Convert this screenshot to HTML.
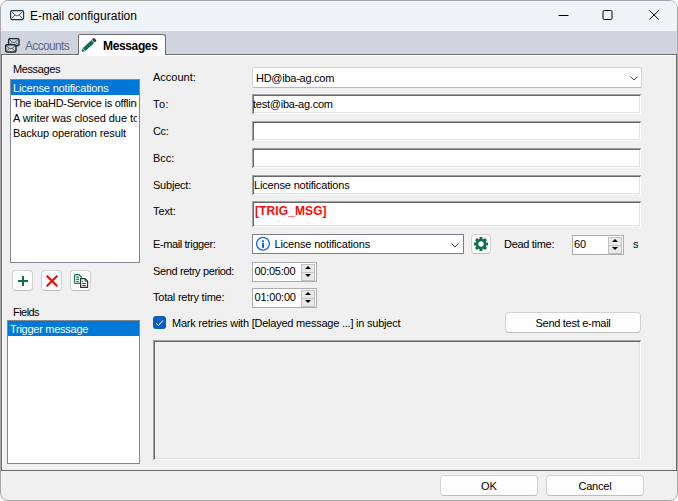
<!DOCTYPE html>
<html>
<head>
<meta charset="utf-8">
<title>E-mail configuration</title>
<style>
html,body{margin:0;padding:0;background:#fff;}
body{width:678px;height:501px;overflow:hidden;position:relative;font-family:"Liberation Sans",sans-serif;font-size:11px;color:#000;}
#win{position:absolute;left:0;top:0;width:678px;height:501px;border:1px solid #a8a8a8;border-radius:8px;background:#f0f0f0;overflow:hidden;box-sizing:border-box;}
#win *{position:absolute;box-sizing:border-box;white-space:nowrap;}
#title{left:0;top:0;width:676px;height:30px;background:#eff4f9;}
#title .cap{left:29px;top:7px;font-size:12px;line-height:16px;color:#000;letter-spacing:0.05px;}
#strip{left:0;top:30px;width:676px;height:24px;background:#cfd4df;}
#page{left:0px;top:53px;width:676px;height:417px;border:1px solid #6b6b6b;background:#f0f0f0;box-shadow:inset 0 1px 0 #fff, inset 1px 0 0 #f8f8f8;}
.tab1{left:4px;top:4px;width:74px;height:20px;}
.tab2{left:77px;top:3px;width:88px;height:22px;background:#fff;border:1px solid #6b6b6b;border-bottom:none;border-radius:2px 3px 0 0;}
.lbl{line-height:14px;font-size:11px;}
.list{background:#fff;border:1px solid #828790;}
.sel{background:#0078d7;color:#fff;height:15px;line-height:15px;left:0;}
.it{height:15px;line-height:15px;left:0;overflow:hidden;}
.tb{background:#fff;border-top:2px solid #696969;border-left:2px solid #696969;border-right:1px solid #fff;border-bottom:1px solid #fff;box-shadow:inset -1px -1px 0 #e3e3e3;}
.tb:before{content:"";position:absolute;left:-2px;top:-2px;right:-1px;height:1px;background:#a0a0a0;}
.tb:after{content:"";position:absolute;left:-2px;top:-2px;bottom:-1px;width:1px;background:#a0a0a0;}
.btn{background:#fdfdfd;border:1px solid #d2d2d2;border-bottom-color:#bdbdbd;border-radius:4px;text-align:center;}
.cmb{background:#fff;border:1px solid #d4d4d4;border-bottom-color:#b8b8b8;border-radius:2px;}
.cmb2{background:#fff;border:1px solid #7a7f8c;}
.num{background:#fff;border:1px solid #abadb3;}
.spu,.spd{background:#e9e9e9;border:1px solid #c2c2c2;width:14px;height:9px;}
.spu svg,.spd svg{left:3px;top:2px;}.spu svg{top:1px}.spd svg{top:1px}
</style>
</head>
<body>
<div id="win">
  <div id="title">
    <svg style="left:9px;top:9px" width="15" height="11" viewBox="0 0 15 11"><rect x="0.6" y="0.6" width="13" height="9" rx="1.5" fill="none" stroke="#27343a" stroke-width="1.2"/><path d="M1.5 1.5 L5 5 M12.700 1.5 L9.200 5 M1.5 8.600 L5 5 Q7.100 6.700 9.200 5 L12.700 8.600" fill="none" stroke="#27343a" stroke-width="0.8"/></svg>
    <span class="cap">E-mail configuration</span>
    <svg style="left:557px;top:13px" width="12" height="3" viewBox="0 0 12 3"><path d="M0.5 1.500 H10.500" stroke="#000" stroke-width="1"/></svg>
    <svg style="left:601px;top:9px" width="12" height="12" viewBox="0 0 12 12"><rect x="1" y="0.5" width="9" height="9" rx="1.200" fill="none" stroke="#000" stroke-width="1"/></svg>
    <svg style="left:648px;top:9px" width="12" height="12" viewBox="0 0 12 12"><path d="M0.300 0.400 L9.900 9.600 M9.900 0.400 L0.300 9.600" stroke="#000" stroke-width="1" fill="none"/></svg>
  </div>
  <div id="strip">
    <div class="tab1">
      <svg style="left:0px;top:3px" width="16" height="16" viewBox="0 0 16 16" fill="none" stroke="#1f2a2a"><rect x="3.600" y="0.600" width="10.400" height="7.200" rx="1.600" stroke-width="1.400" fill="#cfd4df"/><path d="M4.600 1.600 L7 4 Q8.800 5 10.600 4 L13 1.600 M4.600 6.800 L7 4.500 M13 6.800 L10.600 4.500" stroke-width="0.7"/><rect x="0.600" y="6.800" width="10.400" height="7.200" rx="1.600" stroke-width="1.400" fill="#cfd4df"/><path d="M1.600 7.800 L4 10.200 Q5.800 11.200 7.600 10.200 L10 7.800 M1.600 13 L4 10.700 M10 13 L7.600 10.700" stroke-width="0.7"/></svg>
      <span style="left:20px;top:4px;font-size:12px;line-height:14px;color:#5d6b8a;letter-spacing:-0.675px">Accounts</span>
    </div>
  </div>
  <div id="page">
    <span class="lbl" style="left:11px;top:7px;letter-spacing:-0.39px">Messages</span>
    <div class="list" style="left:8px;top:24px;width:130px;height:184px;overflow:hidden">
      <div class="sel" style="top:0;width:128px;"><span style="left:2px;top:1px;letter-spacing:-0.167px">License notifications</span></div>
      <div class="it" style="top:15px;width:126px;"><span style="left:2px;top:1px;letter-spacing:-0.25px">The ibaHD-Service is offline</span></div>
      <div class="it" style="top:30px;width:126px;"><span style="left:2px;top:1px;letter-spacing:-0.07px">A writer was closed due to</span></div>
      <div class="it" style="top:45px;width:126px;"><span style="left:2px;top:1px;letter-spacing:-0.113px">Backup operation result</span></div>
    </div>
    <div class="btn" style="left:10px;top:215px;width:21px;height:21px;"><svg style="left:0;top:0" width="19" height="19" viewBox="0 0 19 19"><path d="M5 10 H15 M10 5 V15" stroke="#0e6e48" stroke-width="2" fill="none"/></svg></div>
    <div class="btn" style="left:39px;top:215px;width:21px;height:21px;"><svg style="left:0;top:0" width="19" height="19" viewBox="0 0 19 19"><path d="M4.700 4.700 L15.300 15.300 M15.300 4.700 L4.700 15.300" stroke="#ff0000" stroke-width="2" fill="none"/></svg></div>
    <div class="btn" style="left:68px;top:215px;width:21px;height:21px;"><svg style="left:0;top:0" width="19" height="19" viewBox="0 0 19 19" fill="none"><path d="M9 12.400 H4.700 Q3.500 12.400 3.500 11.200 V4.800 Q3.500 3.600 4.700 3.600 H8 L10.300 5.900 V7" stroke="#12784e" stroke-width="1.300"/><path d="M5.200 6.100 H8 M5.200 8.400 H8 M5.200 10.500 H8" stroke="#12784e" stroke-width="1.200"/><path d="M9.600 7.600 H14 L16.600 10.200 V16.400 H9.600 Z" fill="#fff" stroke="#2b3838" stroke-width="1.200"/><path d="M14 7.600 V10.200 H16.600" stroke="#2b3838" stroke-width="0.9"/><path d="M11.200 12.500 H14.800 M11.200 14.600 H14.800 M11 10.300 H12.200" stroke="#2b3838" stroke-width="1"/></svg></div>
    <span class="lbl" style="left:11px;top:250px;letter-spacing:-0.55px">Fields</span>
    <div class="list" style="left:5px;top:265px;width:133px;height:144px;overflow:hidden">
      <div class="sel" style="top:0;width:131px;"><span style="left:2px;top:1px;letter-spacing:-0.27px">Trigger message</span></div>
    </div>

    <span class="lbl" style="left:151px;top:15px">Account:</span>
    <span class="lbl" style="left:151px;top:42px;letter-spacing:0.45px">To:</span>
    <span class="lbl" style="left:151px;top:69px;letter-spacing:-0.4px">Cc:</span>
    <span class="lbl" style="left:151px;top:96px">Bcc:</span>
    <span class="lbl" style="left:151px;top:123px;letter-spacing:-0.22px">Subject:</span>
    <span class="lbl" style="left:151px;top:149px;letter-spacing:-0.1px">Text:</span>
    <span class="lbl" style="left:151px;top:182px;letter-spacing:-0.4px">E-mail trigger:</span>
    <span class="lbl" style="left:151px;top:209px;letter-spacing:-0.355px">Send retry period:</span>
    <span class="lbl" style="left:151px;top:235px;letter-spacing:-0.23px">Total retry time:</span>

    <div class="cmb" style="left:250px;top:12px;width:390px;height:21px;"><span class="lbl" style="left:3px;top:3px;letter-spacing:-0.26px">HD@iba-ag.com</span><svg style="left:377px;top:7.500px" width="10" height="6" viewBox="0 0 10 6"><path d="M0.5 0.5 L4 4 L7.500 0.5" fill="none" stroke="#444" stroke-width="1"/></svg></div>
    <div class="tb" style="left:250px;top:39px;width:389px;height:20px;"><span class="lbl" style="left:-1px;top:1px;letter-spacing:-0.24px">test@iba-ag.com</span></div>
    <div class="tb" style="left:250px;top:66px;width:389px;height:20px;"></div>
    <div class="tb" style="left:250px;top:93px;width:389px;height:20px;"></div>
    <div class="tb" style="left:250px;top:120px;width:389px;height:20px;"><span class="lbl" style="left:0px;top:1px;letter-spacing:-0.167px">License notifications</span></div>
    <div class="tb" style="left:250px;top:146px;width:389px;height:26px;"><span class="lbl" style="left:1px;top:1px;color:#fa0a0a;font-weight:bold;font-size:12px;letter-spacing:0.1px">[TRIG_MSG]</span></div>

    <div class="cmb2" style="left:250px;top:179px;width:212px;height:20px;">
      <svg style="left:3px;top:2px" width="15" height="15" viewBox="0 0 15 15"><circle cx="7" cy="6.800" r="6.400" fill="#fff" stroke="#0a64ff" stroke-width="1.300"/><rect x="6" y="6" width="2" height="4.900" fill="#0a64ff"/><rect x="6" y="3.200" width="2" height="2" rx="0.5" fill="#0a64ff"/></svg>
      <span class="lbl" style="left:21.500px;top:2px;letter-spacing:-0.167px">License notifications</span>
      <svg style="left:198px;top:7.500px" width="10" height="6" viewBox="0 0 10 6"><path d="M0.5 0.5 L4 4 L7.500 0.5" fill="none" stroke="#444" stroke-width="1"/></svg>
    </div>
    <div class="btn" style="left:469px;top:179px;width:20px;height:20px;"><svg style="left:2px;top:2px" width="14" height="14" viewBox="-7 -7 14 14"><g fill="#107048"><circle r="5.300"/><g id="t"><rect x="-1.500" y="-7" width="3" height="14" rx="0.5"/></g><rect x="-1.500" y="-7" width="3" height="14" rx="0.5" transform="rotate(45)"/><rect x="-1.500" y="-7" width="3" height="14" rx="0.5" transform="rotate(90)"/><rect x="-1.500" y="-7" width="3" height="14" rx="0.5" transform="rotate(135)"/></g><circle r="2.700" fill="#fdfdfd"/></svg></div>
    <span class="lbl" style="left:502px;top:182px;letter-spacing:-0.3px">Dead time:</span>
    <div class="num" style="left:570px;top:180px;width:52px;height:20px;"><span class="lbl" style="left:1px;top:1px">60</span><div class="spu" style="left:35px;top:1px"><svg width="6" height="3" viewBox="0 0 6 3"><path d="M0 3 L3 0 L6 3 Z" fill="#000"/></svg></div><div class="spd" style="left:35px;top:9px"><svg width="6" height="3" viewBox="0 0 6 3"><path d="M0 0 L3 3 L6 0 Z" fill="#000"/></svg></div></div>
    <span class="lbl" style="left:631px;top:182px">s</span>

    <div class="num" style="left:250px;top:207px;width:65px;height:20px;"><span class="lbl" style="left:1.500px;top:1px;letter-spacing:-0.26px">00:05:00</span><div class="spu" style="left:48px;top:1px"><svg width="6" height="3" viewBox="0 0 6 3"><path d="M0 3 L3 0 L6 3 Z" fill="#000"/></svg></div><div class="spd" style="left:48px;top:9px"><svg width="6" height="3" viewBox="0 0 6 3"><path d="M0 0 L3 3 L6 0 Z" fill="#000"/></svg></div></div>
    <div class="num" style="left:250px;top:233px;width:65px;height:20px;"><span class="lbl" style="left:1.500px;top:1px;letter-spacing:-0.19px">01:00:00</span><div class="spu" style="left:48px;top:1px"><svg width="6" height="3" viewBox="0 0 6 3"><path d="M0 3 L3 0 L6 3 Z" fill="#000"/></svg></div><div class="spd" style="left:48px;top:9px"><svg width="6" height="3" viewBox="0 0 6 3"><path d="M0 0 L3 3 L6 0 Z" fill="#000"/></svg></div></div>

    <div style="left:151px;top:261px;width:13px;height:13px;background:#0560bf;border-radius:3px;"><svg style="left:0;top:0" width="13" height="13" viewBox="0 0 13 13"><path d="M3 7.300 L5.500 9.500 L10 4.400" fill="none" stroke="#fff" stroke-width="1"/></svg></div>
    <span class="lbl" style="left:170px;top:261px;letter-spacing:-0.227px">Mark retries with [Delayed message ...] in subject</span>
    <div class="btn" style="left:503px;top:257px;width:136px;height:21px;"><span class="lbl" style="left:0;width:100%;top:3px;text-align:center;letter-spacing:-0.28px">Send test e-mail</span></div>

    <div class="tb" style="left:151px;top:285px;width:488px;height:120px;background:#f0f0f0;"></div>
  </div>
  <div class="tab2" style="left:77px;top:33px;height:21px">
      <svg style="left:2px;top:3px" width="16" height="16" viewBox="0 0 16 16"><g transform="translate(0 -1) rotate(-43 8 8)"><rect x="1.200" y="6" width="12" height="4" fill="#107048"/><path d="M0.6 6 L-1.800 8 L0.6 10 Z" fill="#107048"/><rect x="13.800" y="6" width="2.800" height="4" rx="0.900" fill="#2b3838"/></g></svg>
      <span style="left:24px;top:4px;font-size:12px;line-height:14px;font-weight:bold;color:#000;letter-spacing:-0.36px">Messages</span>
  </div>
  <div class="btn" style="left:439px;top:474px;width:98px;height:21px;"><span class="lbl" style="left:0;width:100%;top:3px;text-align:center">OK</span></div>
  <div class="btn" style="left:545px;top:474px;width:98px;height:21px;"><span class="lbl" style="left:0;width:100%;top:3px;text-align:center;letter-spacing:-0.18px">Cancel</span></div>
</div>
</body>
</html>
